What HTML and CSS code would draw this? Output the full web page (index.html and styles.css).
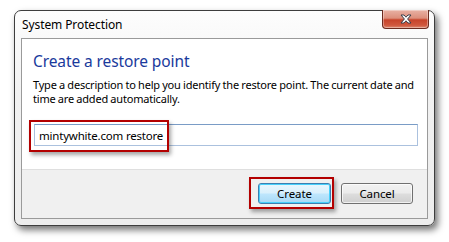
FILE: index.html
```html
<!DOCTYPE html>
<html>
<head>
<meta charset="utf-8">
<link rel="stylesheet" href="styles.css">
</head>
<body>
<div class="window">
  <div class="titlebar">
    <span class="title">System Protection</span>
    <div class="close" aria-label="Close">
      <svg width="16" height="10" viewBox="0 0 16 10">
        <path d="M3 1 L6 1 L8 3.2 L10 1 L13 1 L9.6 5 L13 9 L10 9 L8 6.8 L6 9 L3 9 L6.4 5 Z" fill="#ffffff" stroke="#3a3f4a" stroke-width="1" stroke-linejoin="round"/>
      </svg>
    </div>
  </div>
  <div class="client">
    <div class="content">
      <h1 class="heading">Create a restore point</h1>
      <p class="desc">Type a description to help you identify the restore point. The current date and<br>time are added automatically.</p>
      <div class="field">
        <div class="input">mintywhite.com restore</div>
        <div class="mark mark-input"></div>
      </div>
    </div>
    <div class="footer">
      <div class="btn-wrap">
        <button class="btn btn-default">Create</button>
        <div class="mark mark-btn"></div>
      </div>
      <button class="btn">Cancel</button>
    </div>
  </div>
</div>
</body>
</html>
```

FILE: styles.css
```css
* { box-sizing: border-box; }
html, body {
  margin: 0;
  padding: 0;
  background: #ffffff;
  width: 449px;
  height: 242px;
  overflow: hidden;
}
body {
  font-family: "Noto Sans", "Open Sans", "DejaVu Sans", sans-serif;
  font-size: 12px;
  color: #000;
}
.window {
  margin: 10px 0 0 14px;
  width: 421px;
  height: 216px;
  border: 1px solid #3d3d3d;
  border-radius: 7px;
  background: linear-gradient(#fdfdfd, #f1f1f1 40%, #ededed);
  box-shadow: 3px 4px 7px rgba(0,0,0,0.55);
  display: flex;
  flex-direction: column;
  padding: 0 6px 6px 6px;
}
.titlebar {
  height: 27px;
  display: flex;
  justify-content: space-between;
  align-items: flex-start;
}
.title {
  margin-top: 7px;
  margin-left: 1px;
  font-size: 12px;
  line-height: 14px;
  color: #000;
  letter-spacing: -0.1px;
}
.close {
  margin-top: -1px;
  margin-right: -1px;
  width: 47px;
  height: 19px;
  border: 1px solid #6b2b1f;
  border-top: none;
  border-radius: 0 0 4px 4px;
  background: linear-gradient(#e8b1a4 0%, #dc8f7c 45%, #c7432a 55%, #d0583e 85%, #dd8a72 100%);
  box-shadow: inset 0 0 0 1px rgba(255,255,255,0.35);
  display: flex;
  align-items: center;
  justify-content: center;
}
.client {
  flex: 1;
  border: 1px solid #9a9a9a;
  background: #fff;
  display: flex;
  flex-direction: column;
}
.content {
  height: 130px;
  padding: 12px 10px 0 11px;
}
.heading {
  margin: 0;
  font-weight: normal;
  font-size: 15.5px;
  line-height: 20px;
  color: #1a3a9c;
  letter-spacing: -0.1px;
}
.desc {
  margin: 7px 0 0 0;
  font-size: 11px;
  line-height: 14px;
  letter-spacing: -0.2px;
  word-spacing: -0.3px;
  white-space: nowrap;
}
.field {
  position: relative;
  margin-top: 18px;
}
.input {
  margin-left: 1px;
  width: 384px;
  height: 22px;
  border: 1px solid #abc1de;
  border-top-color: #7a9cc6;
  padding: 3px 4px 0 4px;
  font-size: 11.5px;
  line-height: 15px;
  letter-spacing: -0.2px;
  color: #000;
}
.mark {
  position: absolute;
  border: 2.5px solid #b30000;
  box-shadow: 2px 3px 4px rgba(0,0,0,0.35);
  pointer-events: none;
}
.mark-input {
  left: -4px;
  top: -4px;
  width: 140px;
  height: 32px;
}
.footer {
  flex: 1;
  background: #f0f0f0;
  border-top: 1px solid #dfdfdf;
  display: flex;
  justify-content: flex-end;
  align-items: flex-start;
  gap: 10px;
  padding: 13px 14px 0 0;
}
.btn-wrap {
  position: relative;
}
.btn {
  display: block;
  width: 72px;
  height: 21px;
  margin: 0;
  padding: 0;
  font-family: inherit;
  font-size: 11.5px;
  letter-spacing: -0.1px;
  color: #000;
  border: 1px solid #707070;
  border-radius: 3px;
  background: linear-gradient(#f2f2f2 0%, #ebebeb 48%, #dddddd 52%, #cfcfcf 100%);
  box-shadow: inset 0 0 0 1px rgba(255,255,255,0.7);
}
.btn-default {
  width: 73px;
  border-color: #3c7fb1;
  background: linear-gradient(#eaf6fd 0%, #d9f0fc 48%, #bee6fd 52%, #a7d9f5 100%);
  box-shadow: inset 0 0 0 1px #48d0fb;
}
.mark-btn {
  left: -9px;
  top: -6px;
  width: 85px;
  height: 32px;
}
```
